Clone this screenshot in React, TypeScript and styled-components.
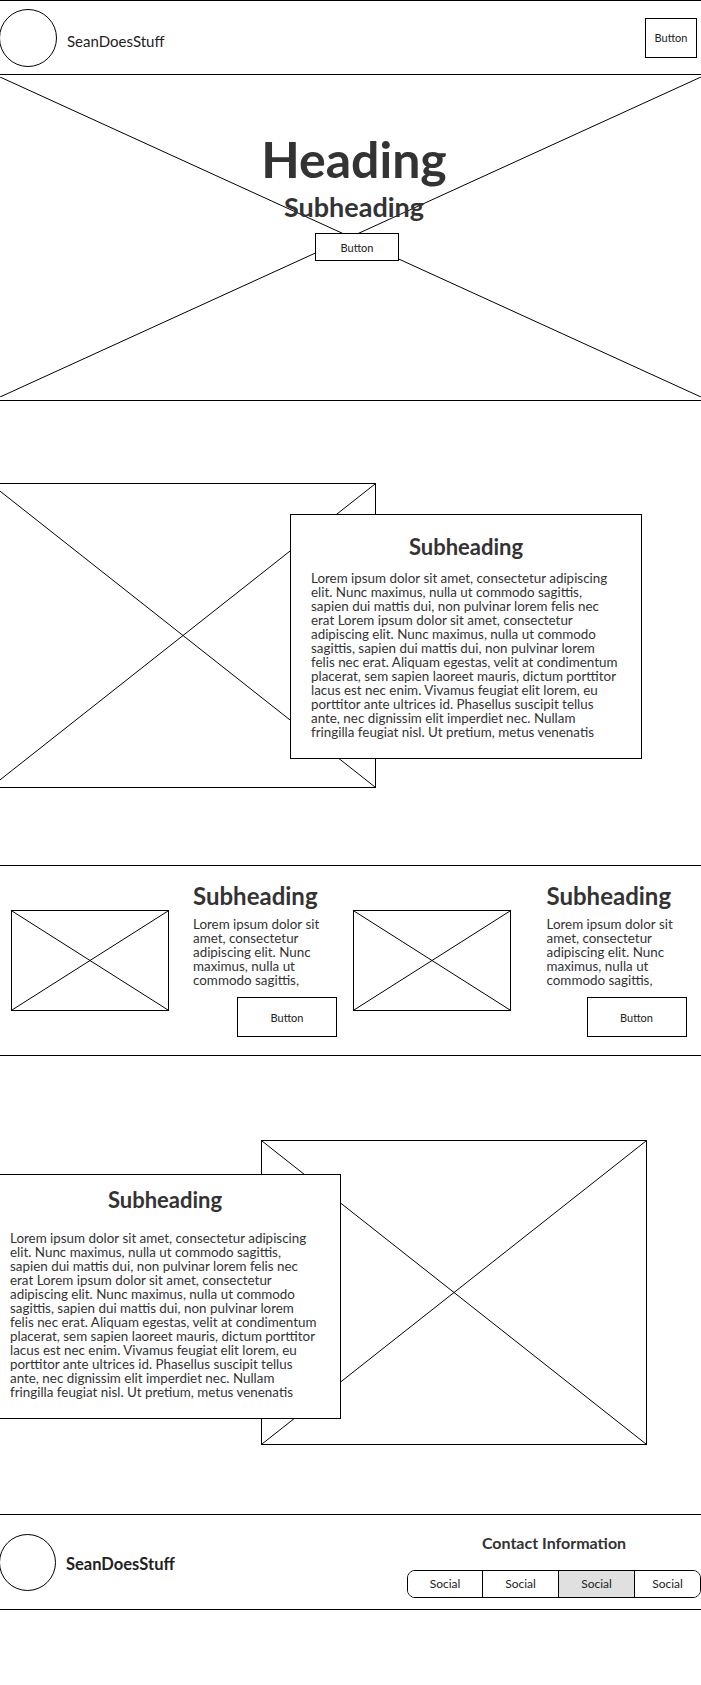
import React from 'react';
import styled, { createGlobalStyle } from 'styled-components';

const GlobalStyle = createGlobalStyle`
  body {
    margin: 0;
    background: #fff;
    font-family: Lato, "Noto Sans", sans-serif;
    color: #333;
  }
  * { box-sizing: border-box; }
`;

const LOREM_LONG =
  'Lorem ipsum dolor sit amet, consectetur adipiscing elit. Nunc maximus, nulla ut commodo sagittis, sapien dui mattis dui, non pulvinar lorem felis nec erat Lorem ipsum dolor sit amet, consectetur adipiscing elit. Nunc maximus, nulla ut commodo sagittis, sapien dui mattis dui, non pulvinar lorem felis nec erat. Aliquam egestas, velit at condimentum placerat, sem sapien laoreet mauris, dictum porttitor lacus est nec enim. Vivamus feugiat elit lorem, eu porttitor ante ultrices id. Phasellus suscipit tellus ante, nec dignissim elit imperdiet nec. Nullam fringilla feugiat nisl. Ut pretium, metus venenatis';
const LOREM_SHORT =
  'Lorem ipsum dolor sit amet, consectetur adipiscing elit. Nunc maximus, nulla ut commodo sagittis,';

const Page = styled.div`
  width: 100%;
  overflow: hidden;
`;

/* ---------- placeholder image ---------- */

const Frame = styled.div<{ $w: number; $h: number; $overlap?: number }>`
  flex: none;
  width: ${p => p.$w}px;
  height: ${p => p.$h}px;
  margin-left: ${p => p.$overlap || 0}px;
  border: 1px solid #000;
  background: #fff;

  svg {
    display: block;
    width: 100%;
    height: 100%;
  }
`;

const Cross = () => (
  <svg viewBox="0 0 100 100" preserveAspectRatio="none">
    <line x1="0" y1="0" x2="100" y2="100" stroke="#000" strokeWidth="1" vectorEffect="non-scaling-stroke" />
    <line x1="100" y1="0" x2="0" y2="100" stroke="#000" strokeWidth="1" vectorEffect="non-scaling-stroke" />
  </svg>
);

const Placeholder = ({ w, h, overlap }: { w: number; h: number; overlap?: number }) => (
  <Frame $w={w} $h={h} $overlap={overlap}>
    <Cross />
  </Frame>
);

/* ---------- shared bits ---------- */

const OutlineButton = styled.button<{ $w: number; $h: number }>`
  position: relative;
  flex: none;
  width: ${p => p.$w}px;
  height: ${p => p.$h}px;
  padding: 0;
  border: 1px solid #000;
  background: #fff;
  color: #222;
  font-family: Lato, sans-serif;
  font-size: 11px;
  cursor: pointer;
`;

const Circle = styled.div<{ $size: number }>`
  flex: none;
  width: ${p => p.$size}px;
  height: ${p => p.$size}px;
  border: 1px solid #000;
  border-radius: 50%;
`;

/* ---------- header ---------- */

const Header = styled.header`
  display: flex;
  align-items: center;
  height: 75px;
  border-top: 1px solid #000;
  border-bottom: 1px solid #000;
  padding: 0 4px 0 0;
`;

const Brand = styled.div`
  display: flex;
  align-items: center;
  gap: 10px;
  margin-left: -1px;
`;

const BrandName = styled.span<{ $bold?: boolean }>`
  font-size: ${p => (p.$bold ? 16.5 : 15)}px;
  font-weight: ${p => (p.$bold ? 700 : 400)};
  color: #222;
  margin-top: ${p => (p.$bold ? 3 : 6)}px;
`;

const Spacer = styled.div`
  flex: 1;
`;

/* ---------- hero ---------- */

const Hero = styled.section`
  position: relative;
  height: 326px;
  border-bottom: 1px solid #000;
  display: flex;
  flex-direction: column;
  align-items: center;
  padding: 59px 0 0 7px;

  ${OutlineButton} {
    margin-left: 6px;
  }
`;

const HeroArt = styled.div`
  position: absolute;
  inset: 2px 0 3px 0;

  svg {
    width: 100%;
    height: 100%;
    display: block;
  }
`;

const HeroTitle = styled.h1`
  position: relative;
  margin: 0;
  font-size: 50px;
  line-height: 1;
  font-weight: 700;
  color: #333;
`;

const HeroSub = styled.h2`
  position: relative;
  margin: 9px 0 13px;
  font-size: 27px;
  line-height: 1;
  font-weight: 700;
  color: #333;
`;

/* ---------- feature (image + overlapping card) ---------- */

const Feature = styled.section<{ $top: number; $bottom: number; $shift: number }>`
  display: flex;
  align-items: flex-start;
  padding: ${p => p.$top}px 0 ${p => p.$bottom}px;
  margin-left: ${p => p.$shift}px;
`;

const Card = styled.div<{ $offset: number; $overlap: number; $headGap: number }>`
  position: relative;
  z-index: 1;
  flex: none;
  width: 352px;
  margin-top: ${p => p.$offset}px;
  margin-left: ${p => p.$overlap}px;
  border: 1px solid #000;
  background: #fff;
  padding: ${p => 21 - p.$headGap}px 20px 19px 20px;

  h3 {
    margin: 0 0 ${p => 13 + p.$headGap}px;
    font-size: 22px;
    line-height: 1;
    font-weight: 700;
    text-align: center;
    color: #333;
  }
`;

const Body = styled.p`
  margin: 0;
  font-size: 13.4px;
  line-height: 14px;
  color: #333;
`;

/* ---------- two-up ---------- */

const Duo = styled.section`
  display: grid;
  grid-template-columns: 1fr 1fr;
  height: 191px;
  border-top: 1px solid #000;
  border-bottom: 1px solid #000;
`;

const DuoItem = styled.div<{ $pad: number; $gap: number; $col: number }>`
  display: flex;
  align-items: center;
  padding-left: ${p => p.$pad}px;
  gap: ${p => p.$gap}px;

  & > div:last-child {
    width: ${p => p.$col}px;
  }
`;

const DuoText = styled.div`
  display: flex;
  flex-direction: column;

  h3 {
    margin: 0 0 9px;
    font-size: 24px;
    line-height: 1;
    font-weight: 700;
    color: #333;
  }

  button {
    align-self: flex-end;
    margin-top: 10px;
  }
`;

/* ---------- footer ---------- */

const Footer = styled.footer`
  display: flex;
  align-items: center;
  height: 96px;
  border-top: 1px solid #000;
  border-bottom: 1px solid #000;
`;

const Contact = styled.div`
  display: flex;
  flex-direction: column;
  align-items: center;
  margin-top: 7px;
  width: 294px;

  h4 {
    margin: 0 0 19px;
    font-size: 16px;
    line-height: 17px;
    font-weight: 700;
    color: #333;
  }
`;

const SocialGroup = styled.div`
  display: grid;
  grid-template-columns: 74px 76px 76px 1fr;
  width: 100%;
  height: 28px;
  border: 1px solid #000;
  border-radius: 8px;
  overflow: hidden;
`;

const Social = styled.button<{ $active?: boolean }>`
  border: 0;
  border-left: 1px solid #000;
  background: ${p => (p.$active ? '#e0e0e0' : '#fff')};
  font-family: Lato, sans-serif;
  font-size: 12px;
  color: #222;
  padding: 0;

  &:first-child {
    border-left: 0;
  }
`;

const FeatureCard = (props: { offset: number; overlap: number; headGap: number }) => (
  <Card $offset={props.offset} $overlap={props.overlap} $headGap={props.headGap}>
    <h3>Subheading</h3>
    <Body>{LOREM_LONG}</Body>
  </Card>
);

const DuoBlock = (props: { pad: number; gap: number; col: number }) => (
  <DuoItem $pad={props.pad} $gap={props.gap} $col={props.col}>
    <Placeholder w={158} h={101} />
    <DuoText>
      <h3>Subheading</h3>
      <Body>{LOREM_SHORT}</Body>
      <OutlineButton $w={100} $h={40}>Button</OutlineButton>
    </DuoText>
  </DuoItem>
);

export default function App() {
  return (
    <Page>
      <GlobalStyle />
      <Header>
        <Brand>
          <Circle $size={58} />
          <BrandName>SeanDoesStuff</BrandName>
        </Brand>
        <Spacer />
        <OutlineButton $w={52} $h={40}>Button</OutlineButton>
      </Header>

      <Hero>
        <HeroArt>
          <Cross />
        </HeroArt>
        <HeroTitle>Heading</HeroTitle>
        <HeroSub>Subheading</HeroSub>
        <OutlineButton $w={84} $h={28}>Button</OutlineButton>
      </Hero>

      <Feature $top={82} $bottom={77} $shift={-10}>
        <Placeholder w={386} h={305} />
        <FeatureCard offset={31} overlap={-86} headGap={0} />
      </Feature>

      <Duo>
        <DuoBlock pad={11} gap={24} col={144} />
        <DuoBlock pad={2} gap={36} col={140} />
      </Duo>

      <Feature $top={84} $bottom={69} $shift={-11}>
        <FeatureCard offset={34} overlap={0} headGap={7} />
        <Placeholder w={386} h={305} overlap={-80} />
      </Feature>

      <Footer>
        <Brand>
          <Circle $size={57} />
          <BrandName $bold>SeanDoesStuff</BrandName>
        </Brand>
        <Spacer />
        <Contact>
          <h4>Contact Information</h4>
          <SocialGroup>
            <Social>Social</Social>
            <Social>Social</Social>
            <Social $active>Social</Social>
            <Social>Social</Social>
          </SocialGroup>
        </Contact>
      </Footer>
    </Page>
  );
}
